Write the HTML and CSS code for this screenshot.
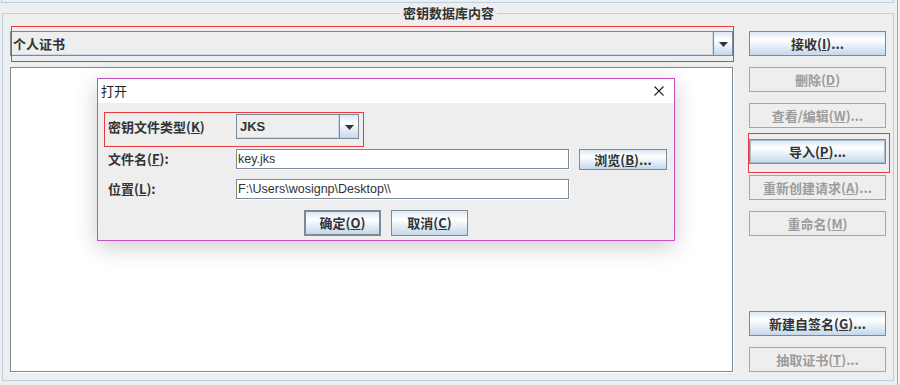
FILE: index.html
```html
<!DOCTYPE html>
<html lang="zh-CN">
<head>
<meta charset="utf-8">
<title>密钥数据库内容</title>
<link rel="stylesheet" href="styles.css">
</head>
<body>
<div class="window">
  <div class="prev-panel"></div>
  <fieldset class="keystore">
    <legend class="keystore-title">密钥数据库内容</legend>
    <div class="keystore-body">
      <div class="left-col">
        <div class="combo combo-main annot annot-combo">
          <div class="combo-value">个人证书</div>
          <div class="combo-arrow"><svg width="9" height="5" viewBox="0 0 9 5"><polygon points="0,0 9,0 4.5,5" fill="#333"/></svg></div>
        </div>
        <div class="cert-list"></div>
      </div>
      <div class="actions">
        <button class="btn">接收(<u>I</u>)...</button>
        <button class="btn" disabled>删除(<u>D</u>)</button>
        <button class="btn" disabled>查看/编辑(<u>W</u>)...</button>
        <button class="btn btn-focus annot annot-import">导入(<u>P</u>)...</button>
        <button class="btn" disabled>重新创建请求(<u>A</u>)...</button>
        <button class="btn" disabled>重命名(<u>M</u>)</button>
        <div class="spacer"></div>
        <button class="btn">新建自签名(<u>G</u>)...</button>
        <button class="btn" disabled>抽取证书(<u>T</u>)...</button>
      </div>
    </div>
  </fieldset>
</div>
<div class="window-edge"></div>

<div class="dialog">
  <div class="dialog-titlebar">
    <span class="dialog-title">打开</span>
    <svg class="close-icon" width="10" height="10" viewBox="0 0 10 10"><path d="M0.5 0.5 L9.5 9.5 M9.5 0.5 L0.5 9.5" stroke="#222" stroke-width="1.1" fill="none"/></svg>
  </div>
  <div class="dialog-form">
    <label class="form-label">密钥文件类型(<u>K</u>)</label>
    <div class="combo combo-type">
      <div class="combo-value latin">JKS</div>
      <div class="combo-arrow"><svg width="9" height="5" viewBox="0 0 9 5"><polygon points="0,0 9,0 4.5,5" fill="#333"/></svg></div>
    </div>
    <div></div>

    <label class="form-label">文件名(<u>F</u>):</label>
    <div class="text-field">key.jks</div>
    <button class="btn btn-browse">浏览(<u>B</u>)...</button>

    <label class="form-label">位置(<u>L</u>):</label>
    <div class="text-field">F:\Users\wosignp\Desktop\\</div>
    <div></div>
  </div>
  <div class="dialog-buttons">
    <button class="btn btn-dlg btn-default">确定(<u>O</u>)</button>
    <button class="btn btn-dlg">取消(<u>C</u>)</button>
  </div>
</div>
</body>
</html>
```

FILE: styles.css
```css
html, body {
  margin: 0;
  padding: 0;
}

body {
  width: 900px;
  height: 385px;
  background: #eeeeee;
  display: flex;
  overflow: hidden;
  position: relative;
  font-family: "Noto Sans CJK SC", "Liberation Sans", sans-serif;
  font-size: 13px;
  color: #333333;
}

.window {
  width: 897px;
  flex: none;
}

.window-edge {
  width: 1px;
  background: #a9a9a9;
  flex: none;
}

.prev-panel {
  height: 2px;
  margin: 0 3px 0 1px;
  border: 1px solid #b8cfe5;
  border-top: 0;
}

.keystore {
  margin: 2px 3px 0 2px;
  padding: 0 6px 8px 7px;
  border: 1px solid #b8cfe5;
  min-width: 0;
}

.keystore-title {
  margin: 0 auto;
  padding: 0 3px;
  font-weight: bold;
  font-size: 13px;
  line-height: 16px;
  color: #333333;
}

.keystore-body {
  display: grid;
  grid-template-columns: 723px 137px;
  column-gap: 16px;
  height: 351px;
  padding-top: 10px;
  box-sizing: border-box;
}

.left-col {
  display: flex;
  flex-direction: column;
  gap: 11px;
  min-height: 0;
}

.combo {
  box-sizing: border-box;
  height: 25px;
  border: 1px solid #7a8a99;
  display: flex;
  background: #eeeeee;
}

.combo-value {
  flex: 1;
  padding-left: 2px;
  font-weight: bold;
  font-size: 13px;
  line-height: 23px;
  box-shadow: inset -1px -1px 0 #c9d9ea;
  white-space: nowrap;
  overflow: hidden;
}

.combo-value.latin {
  font-family: "Liberation Sans", sans-serif;
  padding-left: 3px;
}

.combo-arrow {
  width: 18px;
  border-left: 1px solid #7a8a99;
  background: linear-gradient(#dde8f3, #ffffff 35%, #c4d7ea);
  display: flex;
  align-items: center;
  justify-content: center;
}

.combo-arrow svg {
  display: block;
  margin-top: 1px;
}

.combo-main {
  position: relative;
}

.cert-list {
  flex: 1;
  background: #ffffff;
  border: 1px solid #7a8a99;
  box-shadow: 1px 1px 0 #ffffff;
}

.actions {
  display: flex;
  flex-direction: column;
  gap: 11px;
}

.spacer {
  flex: 1;
}

.btn {
  box-sizing: border-box;
  height: 25px;
  width: 100%;
  margin: 0;
  padding: 0;
  border: 1px solid #7a8a99;
  background: linear-gradient(#dde8f3, #ffffff 35%, #c4d7ea);
  font-family: "Noto Sans CJK SC", "Liberation Sans", sans-serif;
  font-weight: bold;
  font-size: 13px;
  line-height: 21px;
  color: #333333;
  text-align: center;
  white-space: nowrap;
  position: relative;
}

.btn:disabled {
  border-color: #a5a5a5;
  background: #eeeeee;
  color: #9c9c9c;
}

.btn-focus {
  box-shadow: inset 0 0 0 1px #a9bccf;
}

/* red annotation frames drawn over the captured UI */
.annot::after {
  content: "";
  position: absolute;
  border: 1px solid #e93b3b;
  pointer-events: none;
}

.annot-combo::after {
  left: 0;
  right: -2px;
  top: -6px;
  bottom: -7px;
}

.annot-import::after {
  left: -2px;
  right: -5px;
  top: -7px;
  bottom: -10px;
}

/* dialog floating over the main window */
.dialog {
  position: absolute;
  left: 97px;
  top: 78px;
  width: 578px;
  height: 163px;
  box-sizing: border-box;
  border: 1px solid #c850c0;
  background: #eeeeee;
  box-shadow: 0 6px 22px rgba(0, 0, 0, 0.2);
}

.dialog-titlebar {
  height: 24px;
  background: #ffffff;
  display: flex;
  align-items: center;
  justify-content: space-between;
  padding: 0 10px 0 3px;
}

.dialog-title {
  font-size: 13px;
  line-height: 16px;
  color: #222222;
}

.close-icon {
  display: block;
}

.dialog-form {
  position: relative;
  display: grid;
  grid-template-columns: 118px 333px 88px;
  grid-template-rows: 25px 20px 20px;
  column-gap: 10px;
  row-gap: 10px;
  margin: 11px 0 0 10px;
}

.dialog-form::before {
  content: "";
  position: absolute;
  left: -4px;
  top: -2px;
  width: 258px;
  height: 33px;
  border: 1px solid #e93b3b;
  pointer-events: none;
}

.form-label {
  align-self: center;
  font-weight: bold;
  font-size: 13px;
  line-height: 16px;
  white-space: nowrap;
}

.combo-type {
  width: 123px;
}

.text-field {
  box-sizing: border-box;
  height: 20px;
  background: #ffffff;
  border: 1px solid #7a8a99;
  box-shadow: 1px 1px 0 #ffffff;
  padding-left: 1px;
  font-family: "Liberation Sans", sans-serif;
  font-size: 12.5px;
  line-height: 18px;
  color: #333333;
  white-space: nowrap;
  overflow: hidden;
}

.btn-browse {
  height: 21px;
  line-height: 18px;
}

.dialog-buttons {
  display: flex;
  justify-content: center;
  gap: 10px;
  margin-top: 11px;
}

.btn-dlg {
  width: 77px;
  height: 26px;
  line-height: 22px;
}

.btn-default {
  border-width: 2px;
  line-height: 20px;
}
```
